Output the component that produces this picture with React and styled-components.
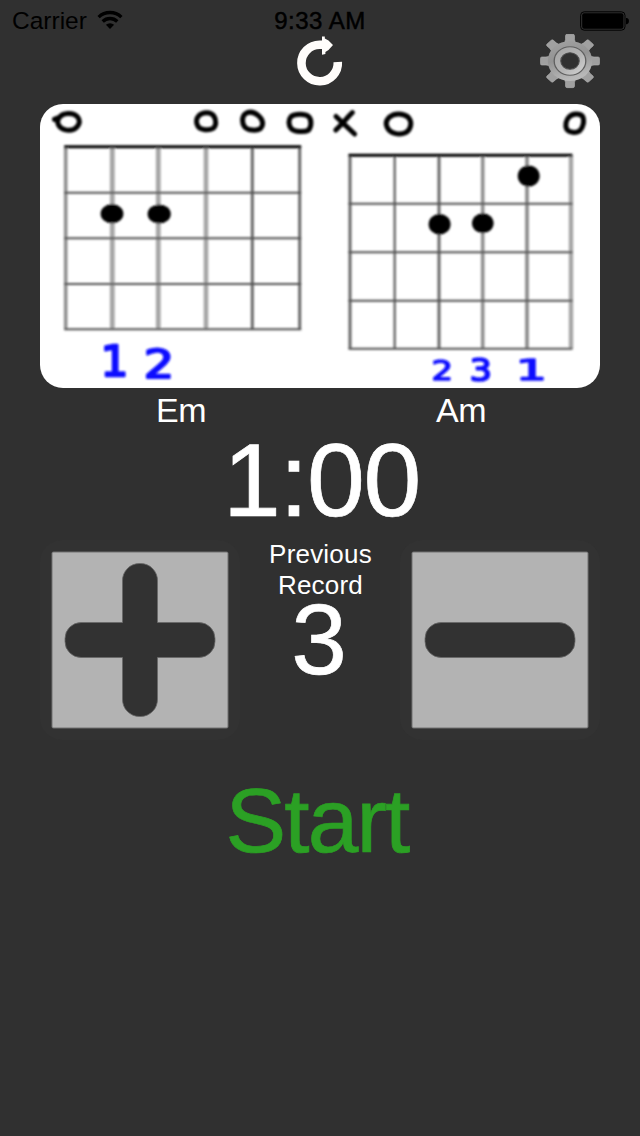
import React from "react";
import styled, { createGlobalStyle } from "styled-components";

const GlobalStyle = createGlobalStyle`
  * { box-sizing: border-box; }
  body {
    margin: 0;
    background: #303030;
    font-family: "Liberation Sans", Arial, sans-serif;
  }
`;

const Screen = styled.main`
  width: 640px;
  height: 1136px;
  background: #303030;
  color: #fff;
  display: flex;
  flex-direction: column;
  overflow: hidden;
`;

const StatusBar = styled.header`
  display: grid;
  grid-template-columns: 1fr auto 1fr;
  align-items: center;
  height: 34px;
  padding: 6px 11px 0 12px;
  color: #000;
  font-size: 24.5px;
  line-height: 28px;
`;

const Carrier = styled.div`
  display: flex;
  align-items: center;
  gap: 10px;
  padding-top: 1px;

  svg { margin-top: -2px; }
`;

const Clock = styled.div`
  padding-top: 1px;
  margin-left: -1px;
  font-size: 24px;
  letter-spacing: 0.5px;
  -webkit-text-stroke: 0.5px #000;
`;

const BatterySlot = styled.div`
  display: flex;
  justify-content: flex-end;
`;

const Toolbar = styled.nav`
  display: grid;
  grid-template-columns: 1fr 60px 1fr;
  height: 70px;
  padding: 0 40px;
`;

const IconButton = styled.button`
  border: 0;
  padding: 0;
  background: none;
  width: 60px;
  height: 56px;
  grid-column: ${(p) => p.$column};
  justify-self: ${(p) => p.$align || "center"};

  svg { display: block; }
`;

const ChordCard = styled.section`
  display: flex;
  height: 284px;
  margin: 0 40px;
  border-radius: 23px;
  background: #fff;
  overflow: hidden;
`;

const ChordNames = styled.div`
  display: grid;
  grid-template-columns: 1fr 1fr;
  padding: 0 39px 0 41px;
  font-size: 34px;
  letter-spacing: -0.6px;
  line-height: 44px;
  text-align: center;
`;

const Timer = styled.div`
  height: 99px;
  padding-left: 3px;
  font-size: 104px;
  letter-spacing: -1.4px;
  line-height: 97px;
  text-align: center;
  -webkit-text-stroke: 0.7px #fff;
`;

const Controls = styled.section`
  display: grid;
  grid-template-columns: 200px 1fr 200px;
  height: 200px;
  margin: 9px 40px 0;
`;

const StepButton = styled.button`
  display: grid;
  place-items: center;
  width: 200px;
  height: 200px;
  padding: 0;
  border: 0;
  border-radius: 22px;
  background: #323232;
`;

const Record = styled.div`
  margin-top: -1px;
  text-align: center;
`;

const RecordLabel = styled.div`
  padding-left: 1px;
  font-size: 26px;
  line-height: 31px;
  letter-spacing: 0.2px;
`;

const RecordValue = styled.div`
  padding-right: 2px;
  font-size: 100px;
  line-height: 77px;
  -webkit-text-stroke: 0.7px #fff;
`;

const StartButton = styled.button`
  align-self: center;
  margin-top: 40px;
  padding: 0 6px 0 0;
  border: 0;
  background: none;
  color: #2ba024;
  font-family: inherit;
  font-size: 91px;
  letter-spacing: -1.8px;
  line-height: 81px;
  -webkit-text-stroke: 0.7px #2ba024;
`;

const Finger = styled.text`
  font-family: "DejaVu Sans", sans-serif;
  fill: #0c0cff;
  stroke: #0c0cff;
  stroke-width: 5.5px;
  stroke-linejoin: round;
`;

const chords = [
  {
    name: "Em",
    xs: [25.7, 72.3, 118.3, 166, 212.3, 259.7],
    widths: [3.6, 4.8, 4.8, 4.6, 3, 3],
    ys: [42.7, 88.7, 134.3, 180, 225.3],
    dots: [[72, 109.7, 11.4, 9.6], [119.2, 110, 11.6, 9.6]],
    marks: [
      "M14.5 15.4 L19.5 13.2 C23 8.6 33 8 37.3 12.6 C41.2 17 39 22.6 34 25.2 C28 27.6 20.5 25.4 18.3 20.4 C17.2 17.6 17.8 15 19.5 13.2",
      "M159 11.6 C163 7.6 171 8 173.8 12 C176.6 16 176.4 22 173 24.4 C169 26.8 160.6 26.2 158 22.4 C155.6 18.6 156.2 14.4 159 11.6 Z",
      "M205 10 C209 7.2 214 8 218.4 11.6 C223.4 15.8 223.8 21.6 220.4 24.6 C216.6 27.2 208 26.6 204.6 22.8 C201.8 19 201.8 13 205 10 Z",
      "M251 12.6 C255 9.6 265 9.6 268.6 12.6 C272 16 271.4 23 268.4 26.2 C264.4 28.4 255 28 251.4 24.8 C248.2 21 248.2 15.6 251 12.6 Z",
    ],
    fingers: [["1", 64.5, 86, 239, 273.3], ["2", 105.5, 131, 244, 275.3]],
  },
  {
    name: "Am",
    xs: [30, 74.7, 119, 162.7, 207, 251],
    widths: [3, 2.4, 3, 3.6, 3.8, 4.4],
    ys: [51.3, 99.7, 148.3, 196.7, 244.7],
    dots: [[208.7, 72, 11, 10.6], [119.6, 120.3, 11, 10.2], [162.8, 119.3, 10.8, 10]],
    marks: [
      "M16 12.5 L34.6 30 M32.4 8.6 C27 14 22 20 15.8 26",
      "M69 13.4 C74 8.8 83 8.8 88 13 C92.4 17.4 91.4 25.4 85.8 28.6 C79 31.8 70 29.4 67.2 23.4 C65.4 19.6 66 16.4 69 13.4 Z",
      "M249 13 C252.4 9.4 259.6 8.8 262.6 12.4 C264.8 16.4 263.2 23.6 259.6 26.8 C256 29.2 249.4 29 246.8 25.4 C244.8 21.4 246 16 249 13 Z",
    ],
    fingers: [
      ["2", 112.7, 130.7, 255.3, 276.7],
      ["3", 151, 170.5, 252.7, 277.7],
      ["1", 200, 224, 254.3, 276.7],
    ],
  },
];

/* Ink boxes of the stroked digits at a 100 unit font size. */
const digitInk = {
  1: { left: 8.9, width: 49 },
  2: { left: 3.8, width: 53.3 },
  3: { left: 4.1, width: 55 },
};

function ChordDiagram({ chord }) {
  const { name, xs, widths, ys, dots, marks, fingers } = chord;
  const left = xs[0];
  const right = xs[xs.length - 1];
  return (
    <svg width="280" height="284" viewBox="0 0 280 284" role="img" aria-label={name}>
      <defs>
        <filter id={`soft-${name}`} x="0" y="0" width="280" height="284" filterUnits="userSpaceOnUse">
          <feGaussianBlur stdDeviation="0.8" />
        </filter>
      </defs>
      <g filter={`url(#soft-${name})`}>
        {xs.map((x, i) => (
          <path
            key={x}
            d={`M${x} ${ys[0]}V${ys[4]}`}
            stroke={widths[i] > 4 ? "#a6a6a6" : widths[i] > 3 ? "#8f8f8f" : "#686868"}
            strokeWidth={widths[i]}
          />
        ))}
        {ys.map((y, i) => (
          <path
            key={y}
            d={`M${left - 1.5} ${y}H${right + 1.5}`}
            stroke={i === 0 ? "#000" : "#505050"}
            strokeWidth={i === 0 ? 3 : 2.1}
          />
        ))}
        {dots.map(([cx, cy, rx, ry]) => (
          <ellipse key={cx} cx={cx} cy={cy} rx={rx} ry={ry} fill="#000" />
        ))}
        {marks.map((d) => (
          <path key={d} d={d} fill="none" stroke="#000" strokeWidth="5" strokeLinecap="round" strokeLinejoin="round" />
        ))}
        {fingers.map(([digit, x0, x1, y0, y1]) => {
          const ink = digitInk[digit];
          const sx = (x1 - x0) / ink.width;
          const sy = (y1 - y0) / 80;
          return (
            <Finger key={digit} fontSize="100" transform={`translate(${x0 - ink.left * sx} ${y1 - 3.5 * sy}) scale(${sx} ${sy})`}>
              {digit}
            </Finger>
          );
        })}
      </g>
    </svg>
  );
}

function WifiIcon() {
  return (
    <svg width="26" height="20" viewBox="0 0 26 20">
      <g fill="none" stroke="#000" strokeWidth="3.3">
        <path d="M1.6 7.1 A16.4 16.4 0 0 1 24.4 7.1" />
        <path d="M5.7 11.5 A10.4 10.4 0 0 1 20.3 11.5" />
      </g>
      <path d="M13 19 L8.9 14.8 A5.9 5.9 0 0 1 17.1 14.8 Z" fill="#000" />
    </svg>
  );
}

function BatteryIcon() {
  return (
    <svg width="49" height="20" viewBox="0 0 49 20">
      <rect x="0.6" y="0.8" width="44.4" height="18.4" rx="3.6" fill="none" stroke="#000" />
      <rect x="2.2" y="2.3" width="41.2" height="15.4" rx="2" fill="#000" />
      <path d="M46 7 H47 Q49 7.4 49 10 Q49 12.8 47 13.2 H46 Z" fill="#000" />
    </svg>
  );
}

function RefreshIcon() {
  return (
    <svg width="60" height="56" viewBox="0 0 60 56">
      <path d="M47.8 28 A18.2 18.2 0 1 1 29.8 10.8 H35" fill="none" stroke="#fffdfb" strokeWidth="8.6" />
      <path d="M32 2.6 H34.8 V4.4 L38.5 6.5 L43 11 L38.5 16 L35.4 18 V20 L32 20.8 Z" fill="#fffdfb" />
    </svg>
  );
}

function GearIcon() {
  return (
    <svg width="60" height="56" viewBox="0 0 60 56">
      <defs>
        <linearGradient id="metal" x1="0" y1="0" x2="0.3" y2="1">
          <stop offset="0" stopColor="#a2a2a2" />
          <stop offset="0.5" stopColor="#939393" />
          <stop offset="1" stopColor="#b8b8b8" />
        </linearGradient>
        <linearGradient id="rim" x1="0" y1="0" x2="1" y2="1">
          <stop offset="0" stopColor="#a4a4a4" />
          <stop offset="0.55" stopColor="#b4b4b4" />
          <stop offset="1" stopColor="#d6d6d6" />
        </linearGradient>
      </defs>
      <g transform="translate(30 27) scale(1 0.9)">
        {[0, 45, 90, 135, 180, 225, 270, 315].map((angle) => (
          <path
            key={angle}
            d="M-7 -19 Q-4.5 -21 -4.5 -24 V-28 Q-4.5 -29.6 -2.8 -29.6 H2.8 Q4.5 -29.6 4.5 -28 V-24 Q4.5 -21 7 -19 Z"
            transform={`rotate(${angle})`}
            fill="#a0a0a0"
            stroke="#b4b4b4"
            strokeWidth="0.6"
          />
        ))}
        <circle r="22.2" fill="url(#metal)" />
        <circle r="15.8" fill="url(#rim)" stroke="#606060" strokeWidth="1.3" />
        <circle r="9.2" fill="#303030" stroke="#4c4c4c" strokeWidth="1.1" />
      </g>
    </svg>
  );
}

const MINUS = "M41 82.5 H159 A16 16 0 0 1 175 98.5 V101.5 A16 16 0 0 1 159 117.5 H41 A16 16 0 0 1 25 101.5 V98.5 A16 16 0 0 1 41 82.5 Z";
const PLUS =
  "M82.5 82.5 V41 A17 17 0 0 1 99.5 23.5 H100.5 A17 17 0 0 1 117.5 41 V82.5 H159 A16 16 0 0 1 175 98.5 V101.5 A16 16 0 0 1 159 117.5 H117.5 V159 A17 17 0 0 1 100.5 176.5 H99.5 A17 17 0 0 1 82.5 159 V117.5 H41 A16 16 0 0 1 25 101.5 V98.5 A16 16 0 0 1 41 82.5 Z";

function StepIcon({ plus }) {
  return (
    <svg width="200" height="200" viewBox="0 0 200 200">
      <rect x="11.5" y="11.5" width="177" height="177" rx="2" fill="#707070" />
      <rect x="12.5" y="12.5" width="175" height="175" rx="1" fill="#b3b3b3" />
      <path d={plus ? PLUS : MINUS} fill="#323232" stroke="#686868" strokeWidth="0.8" />
    </svg>
  );
}

export default function App() {
  return (
    <Screen>
      <GlobalStyle />
      <StatusBar>
        <Carrier>
          Carrier
          <WifiIcon />
        </Carrier>
        <Clock>9:33 AM</Clock>
        <BatterySlot>
          <BatteryIcon />
        </BatterySlot>
      </StatusBar>
      <Toolbar>
        <IconButton $column={2} aria-label="Restart">
          <RefreshIcon />
        </IconButton>
        <IconButton $column={3} $align="end" aria-label="Settings">
          <GearIcon />
        </IconButton>
      </Toolbar>
      <ChordCard>
        {chords.map((chord) => (
          <ChordDiagram key={chord.name} chord={chord} />
        ))}
      </ChordCard>
      <ChordNames>
        {chords.map((chord) => (
          <span key={chord.name}>{chord.name}</span>
        ))}
      </ChordNames>
      <Timer>1:00</Timer>
      <Controls>
        <StepButton aria-label="Increase">
          <StepIcon plus />
        </StepButton>
        <Record>
          <RecordLabel>
            Previous
            <br />
            Record
          </RecordLabel>
          <RecordValue>3</RecordValue>
        </Record>
        <StepButton aria-label="Decrease">
          <StepIcon />
        </StepButton>
      </Controls>
      <StartButton>Start</StartButton>
    </Screen>
  );
}
